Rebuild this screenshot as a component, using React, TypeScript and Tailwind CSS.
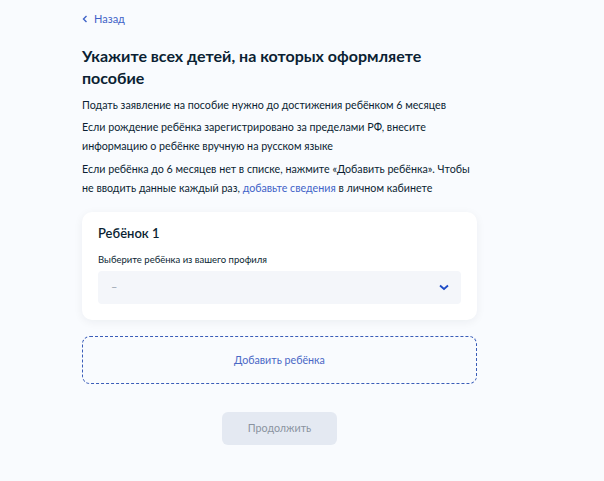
import React from "react";

export default function App() {
  return (
    <div className="min-h-[481px] w-full bg-[#f9fbfe] font-['Lato','Noto_Sans',sans-serif] text-[#0b1f33]">
      <div className="w-[395px] ml-[82px] pt-[12px]">
        <div className="flex items-center gap-[6px] text-[11px] leading-[14px] text-[#3f63c8]">
          <svg width="6" height="8" viewBox="0 0 6 8" fill="none">
            <path d="M4.5 1 L1.5 4 L4.5 7" stroke="#3f63c8" strokeWidth="1.4" />
          </svg>
          <span>Назад</span>
        </div>
        <h1 className="mt-[19px] text-[16px] font-bold leading-[22px] text-[#0b1f33]">
          Укажите всех детей, на которых оформляете пособие
        </h1>
        <p className="mt-[6px] text-[10.7px] leading-[19px]">
          Подать заявление на пособие нужно до достижения ребёнком 6 месяцев
        </p>
        <p className="mt-[3px] text-[10.7px] leading-[19px]">
          Если рождение ребёнка зарегистрировано за пределами РФ, внесите информацию о ребёнке вручную на русском языке
        </p>
        <p className="mt-[4px] text-[10.7px] leading-[19px]">
          Если ребёнка до 6 месяцев нет в списке, нажмите «Добавить ребёнка». Чтобы не вводить данные каждый раз,{" "}
          <span className="text-[#3f63c8]">добавьте сведения</span> в личном кабинете
        </p>
        <div className="mt-[15px] rounded-[10px] bg-white px-[16px] pt-[14px] pb-[16px] shadow-[0_2px_10px_rgba(11,31,51,0.06)]">
          <div className="text-[13px] font-semibold leading-[14px]">Ребёнок 1</div>
          <div className="mt-[14px] text-[9.5px] leading-[12px]">Выберите ребёнка из вашего профиля</div>
          <div className="mt-[5px] flex h-[33px] items-center justify-between rounded-[4px] bg-[#f4f6fa] pl-[13px] pr-[12px]">
            <span className="text-[11px] text-[#9aa4b1]">–</span>
            <svg width="10" height="7" viewBox="0 0 10 7" fill="none">
              <path d="M1 1.5 L5 5 L9 1.5" stroke="#1d4bc6" strokeWidth="1.8" />
            </svg>
          </div>
        </div>
        <div className="mt-[16px] flex h-[48px] items-center justify-center rounded-[8px] border border-dashed border-[#3a5db8] text-[10.7px] text-[#4a68c6]">
          Добавить ребёнка
        </div>
        <div className="mt-[28px] flex justify-center">
          <div className="flex h-[33px] w-[115px] items-center justify-center rounded-[6px] bg-[#e4e9f2] text-[10.7px] text-[#8a939f]">
            Продолжить
          </div>
        </div>
      </div>
    </div>
  );
}
